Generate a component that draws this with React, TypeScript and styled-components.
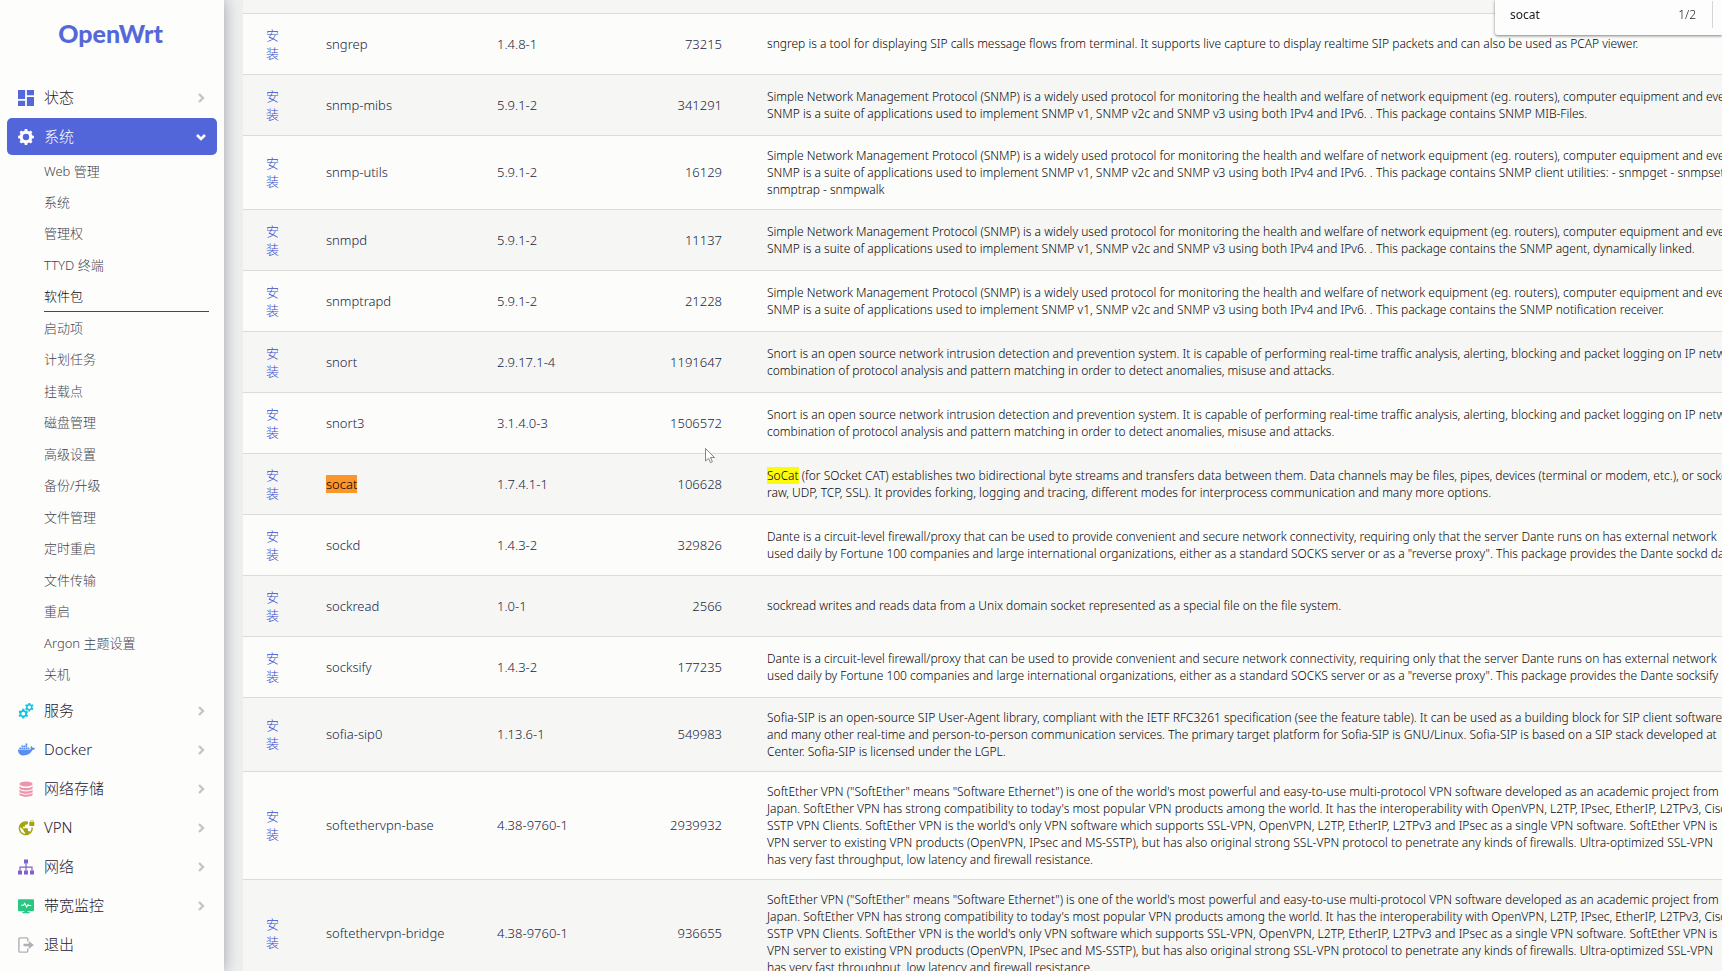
import React from "react";
import styled, { createGlobalStyle } from "styled-components";
import { FaDocker } from "react-icons/fa";
import { MdVpnLock } from "react-icons/md";

const font = `"Noto Sans", "Noto Sans CJK SC", sans-serif`;

const GlobalStyle = createGlobalStyle`
  *, *::before, *::after { box-sizing: border-box; }
  body {
    margin: 0;
    background: #edeeee;
    color: #32325d;
    font-family: ${font};
    font-size: 13px;
    font-weight: 300;
  }
  a { color: inherit; text-decoration: none; }
`;

const Page = styled.div`
  display: flex;
  height: 100vh;
  overflow: hidden;
`;

const Sidebar = styled.nav`
  position: relative;
  z-index: 1;
  flex: 0 0 224px;
  padding: 0 7px;
  background: #fdfdfc;
  box-shadow: 0 0 14px rgba(60, 66, 90, 0.45);
`;

const Brand = styled.a`
  display: block;
  height: 79px;
  padding: 13px 3px 0 0;
  color: #5468da;
  font-family: Lato, sans-serif;
  font-size: 25px;
  font-weight: 900;
  line-height: 40px;
  text-align: center;
`;

const Menu = styled.ul`
  display: flex;
  flex-direction: column;
  gap: 2px;
  margin: 0;
  padding: 0;
  list-style: none;
`;

const MenuLink = styled.a<{ $active?: boolean }>`
  display: flex;
  align-items: center;
  gap: 10px;
  height: 37px;
  padding: 0 10px 0 11px;
  border-radius: 5px;
  background: ${(p) => (p.$active ? "#5266da" : "transparent")};
  color: ${(p) => (p.$active ? "#ffffff" : "#1f2030")};
  font-size: 15px;
`;

const IconBox = styled.span<{ $color: string }>`
  display: flex;
  align-items: center;
  justify-content: center;
  flex: 0 0 16px;
  min-width: 0;
  height: 16px;
  color: ${(p) => p.$color};

  svg { flex: none; }
`;

const MenuLabel = styled.span`
  flex: 1;
  padding-bottom: 2px;
`;

const SubMenu = styled.ul`
  display: grid;
  grid-template-rows: repeat(17, 1fr);
  height: 535px;
  margin: 0 0 0 37px;
  padding: 0 8px 0 0;
  list-style: none;
`;

const SubLink = styled.a<{ $active?: boolean }>`
  display: flex;
  align-items: center;
  height: 31px;
  border-bottom: 1px solid ${(p) => (p.$active ? "#2744b0" : "transparent")};
  color: ${(p) => (p.$active ? "#08080c" : "#44444c")};
  font-size: 13px;
`;

const Main = styled.main`
  flex: 1;
  min-width: 0;
  padding-left: 19px;
  overflow: hidden;
`;

const Table = styled.table`
  border-collapse: collapse;
  table-layout: auto;
  min-width: 100%;
`;

const Row = styled.tr`
  height: 61px;
  background: #fcfcfb;

  &:nth-child(odd) { background: #f6f6f5; }
`;

const EdgeRow = styled.tr`
  height: 13px;
  background: #f6f6f5;
`;

const Cell = styled.td<{ $width?: number; $right?: boolean }>`
  padding: 11px 22px 11px 23px;
  border-top: 1px solid #dbdbdb;
  ${(p) => p.$width && `width: ${p.$width}px; min-width: ${p.$width}px;`}
  text-align: ${(p) => (p.$right ? "right" : "left")};
  color: #17253f;
  font-size: 13px;
  line-height: 18px;
  white-space: nowrap;
`;

const InstallCell = styled(Cell)`
  white-space: normal;
`;

const Description = styled(Cell)`
  color: #060608;
  font-size: 12px;
  line-height: 17px;
`;

const Line = styled.div``;

const InstallLink = styled.a`
  display: block;
  width: 14px;
  color: #3a4bd0;
`;

const Mark = styled.mark<{ $current?: boolean }>`
  background: ${(p) => (p.$current ? "#fa962c" : "#fdfb0c")};
  color: #000000;
`;

const FindBar = styled.div`
  position: fixed;
  z-index: 2;
  top: 0;
  right: 0;
  display: flex;
  align-items: center;
  width: 227px;
  height: 35px;
  padding: 0 9px 6px 15px;
  border-bottom-left-radius: 3px;
  background: #fdfdfd;
  box-shadow: 0 1px 3px rgba(0, 0, 0, 0.5);
  color: #222428;
  font-size: 12px;
`;

const FindInput = styled.input`
  flex: 1;
  min-width: 0;
  padding: 0;
  border: 0;
  outline: 0;
  background: transparent;
  color: #1c1c20;
  font-family: ${font};
  font-size: 12px;
`;

const FindCount = styled.span`
  height: 27px;
  padding-right: 16px;
  border-right: 1px solid #d6d6d6;
  line-height: 27px;
`;

const Cursor = styled.svg`
  position: fixed;
  z-index: 3;
  top: 448px;
  left: 705px;
`;

function gearPath(cx: number, cy: number, outer: number, inner: number, hole: number, teeth: number) {
  const step = (Math.PI * 2) / teeth;
  const at = (r: number, a: number) => `${(cx + r * Math.sin(a)).toFixed(2)} ${(cy - r * Math.cos(a)).toFixed(2)}`;
  let d = "";
  for (let i = 0; i < teeth; i++) {
    const a = i * step;
    d += `${i ? "L" : "M"}${at(inner, a - step * 0.3)}L${at(outer, a - step * 0.2)}L${at(outer, a + step * 0.2)}L${at(inner, a + step * 0.3)}`;
  }
  return `${d}Z M${cx - hole} ${cy}a${hole} ${hole} 0 1 0 ${hole * 2} 0a${hole} ${hole} 0 1 0 ${-hole * 2} 0Z`;
}

const DashboardIcon = () => (
  <svg width="16" height="16" viewBox="3 3 18 18" fill="currentColor">
    <path d="M3 13h8V3H3v10zm0 8h8v-6H3v6zm10 0h8V11h-8v10zm0-18v6h8V3h-8z" />
  </svg>
);

const GearIcon = () => (
  <svg width="16" height="16" viewBox="0 0 16 16">
    <path fillRule="evenodd" fill="currentColor" d={gearPath(8, 8, 8, 6.4, 3.2, 8)} />
  </svg>
);

const GearsIcon = () => (
  <svg width="16" height="16" viewBox="0 0 16 16">
    <path fillRule="evenodd" fill="currentColor" d={gearPath(5.3, 10.7, 5, 3.8, 1.9, 6)} />
    <path fillRule="evenodd" fill="currentColor" d={gearPath(11.3, 4.2, 4.4, 3.3, 1.7, 6)} />
  </svg>
);

const DatabaseIcon = () => (
  <svg width="16" height="16" viewBox="0 0 16 16" fill="currentColor">
    <ellipse cx="8" cy="3" rx="6.6" ry="2.6" />
    <path d="M1.4 5.2c1.4 1.4 4 1.8 6.6 1.8s5.2-.4 6.6-1.8v1.9C14.600 8.500 11.600 9.400 8 9.400S1.400 8.500 1.400 7.100z" />
    <path d="M1.400 8.700c1.400 1.300 4 1.700 6.600 1.700s5.200-.4 6.600-1.700v1.800c0 1.400-3 2.200-6.600 2.200s-6.600-.8-6.600-2.200z" />
    <path d="M1.400 12c1.400 1.300 4 1.700 6.600 1.700s5.200-.4 6.600-1.700v1.600c0 1.400-3 2.200-6.600 2.200s-6.600-.8-6.600-2.200z" />
  </svg>
);

const NetworkIcon = () => (
  <svg width="16" height="16" viewBox="0 0 16 16" fill="currentColor">
    <path d="M6 0.500h4v4H6zM0 11.500h4v4H0zM6 11.500h4v4H6zM12 11.500h4v4h-4z" />
    <path d="M7.400 4.500h1.200v3h6V11.500h-1.200V8.700H8.600v2.800H7.400V8.700H2.600v2.800H1.400V7.500h6z" />
  </svg>
);

const MonitorIcon = () => (
  <svg width="16" height="16" viewBox="0 0 16 16">
    <path fill="currentColor" d="M1 1.200h14a1 1 0 0 1 1 1v10a1 1 0 0 1-1 1H9.600v.9h2v1.200H4.400v-1.200h2v-.9H1a1 1 0 0 1-1-1v-10a1 1 0 0 1 1-1z" />
    <path fill="none" stroke="#fff" strokeWidth="1.100" d="M3 7.300h2.500l1.200-2L8.600 9l1.500-2.300.7.800h2.400" />
  </svg>
);

const LogoutIcon = () => (
  <svg width="16" height="16" viewBox="0 0 16 16">
    <path fill="none" stroke="currentColor" strokeWidth="1.400" d="M9.800 4.500V1.900a1 1 0 0 0-1-1H1.900a1 1 0 0 0-1 1v12.200a1 1 0 0 0 1 1h6.900a1 1 0 0 0 1-1v-2.600" />
    <path fill="currentColor" d="M5.500 6.700h5.300V4l5 4-5 4V9.300H5.500z" />
  </svg>
);

const ChevronRight = () => (
  <svg width="12" height="12" viewBox="0 0 12 12">
    <path d="M4 2l4 4-4 4" fill="none" stroke="#c3c5cc" strokeWidth="2.400" />
  </svg>
);

const ChevronDown = () => (
  <svg width="12" height="10" viewBox="0 0 12 10">
    <path d="M2 3l4 4 4-4" fill="none" stroke="#fff" strokeWidth="2.600" />
  </svg>
);

type Item = { label: string; color: string; icon: React.ReactNode; leaf?: boolean };

const menuBottom: Item[] = [
  { label: "服务", color: "#16c2e2", icon: <GearsIcon /> },
  { label: "Docker", color: "#5a8ff0", icon: <FaDocker size={17} /> },
  { label: "网络存储", color: "#ec96ab", icon: <DatabaseIcon /> },
  { label: "VPN", color: "#a2a413", icon: <MdVpnLock size={17} /> },
  { label: "网络", color: "#8060cc", icon: <NetworkIcon /> },
  { label: "带宽监控", color: "#2bc584", icon: <MonitorIcon /> },
  { label: "退出", color: "#aeb0b5", icon: <LogoutIcon />, leaf: true },
];

const subItems = [
  "Web 管理", "系统", "管理权", "TTYD 终端", "软件包", "启动项", "计划任务", "挂载点", "磁盘管理",
  "高级设置", "备份/升级", "文件管理", "定时重启", "文件传输", "重启", "Argon 主题设置", "关机",
];

const snmp1 = "Simple Network Management Protocol (SNMP) is a widely used protocol for monitoring the health and welfare of network equipment (eg. routers), computer equipment and even";
const snmp2 = "SNMP is a suite of applications used to implement SNMP v1, SNMP v2c and SNMP v3 using both IPv4 and IPv6. . This package contains ";
const snort = [
  "Snort is an open source network intrusion detection and prevention system. It is capable of performing real-time traffic analysis, alerting, blocking and packet logging on IP networks.",
  "combination of protocol analysis and pattern matching in order to detect anomalies, misuse and attacks.",
];
const dante1 = "Dante is a circuit-level firewall/proxy that can be used to provide convenient and secure network connectivity, requiring only that the server Dante runs on has external network";
const dante2 = "used daily by Fortune 100 companies and large international organizations, either as a standard SOCKS server or as a \"reverse proxy\". This package provides the Dante ";
const softether = [
  "SoftEther VPN (\"SoftEther\" means \"Software Ethernet\") is one of the world's most powerful and easy-to-use multi-protocol VPN software developed as an academic project from",
  "Japan. SoftEther VPN has strong compatibility to today's most popular VPN products among the world. It has the interoperability with OpenVPN, L2TP, IPsec, EtherIP, L2TPv3, Cisco",
  "SSTP VPN Clients. SoftEther VPN is the world's only VPN software which supports SSL-VPN, OpenVPN, L2TP, EtherIP, L2TPv3 and IPsec as a single VPN software. SoftEther VPN is",
  "VPN server to existing VPN products (OpenVPN, IPsec and MS-SSTP), but has also original strong SSL-VPN protocol to penetrate any kinds of firewalls. Ultra-optimized SSL-VPN",
  "has very fast throughput, low latency and firewall resistance.",
];

type Pkg = { name: React.ReactNode; version: string; size: string; lines: React.ReactNode[] };

const packages: Pkg[] = [
  { name: "sngrep", version: "1.4.8-1", size: "73215", lines: ["sngrep is a tool for displaying SIP calls message flows from terminal. It supports live capture to display realtime SIP packets and can also be used as PCAP viewer."] },
  { name: "snmp-mibs", version: "5.9.1-2", size: "341291", lines: [snmp1, snmp2 + "SNMP MIB-Files."] },
  { name: "snmp-utils", version: "5.9.1-2", size: "16129", lines: [snmp1, snmp2 + "SNMP client utilities: - snmpget - snmpset", "snmptrap - snmpwalk"] },
  { name: "snmpd", version: "5.9.1-2", size: "11137", lines: [snmp1, snmp2 + "the SNMP agent, dynamically linked."] },
  { name: "snmptrapd", version: "5.9.1-2", size: "21228", lines: [snmp1, snmp2 + "the SNMP notification receiver."] },
  { name: "snort", version: "2.9.17.1-4", size: "1191647", lines: snort },
  { name: "snort3", version: "3.1.4.0-3", size: "1506572", lines: snort },
  {
    name: <Mark $current>socat</Mark>, version: "1.7.4.1-1", size: "106628",
    lines: [
      <><Mark>SoCat</Mark> (for SOcket CAT) establishes two bidirectional byte streams and transfers data between them. Data channels may be files, pipes, devices (terminal or modem, etc.), or sockets</>,
      "raw, UDP, TCP, SSL). It provides forking, logging and tracing, different modes for interprocess communication and many more options.",
    ],
  },
  { name: "sockd", version: "1.4.3-2", size: "329826", lines: [dante1, dante2 + "sockd daemon"] },
  { name: "sockread", version: "1.0-1", size: "2566", lines: ["sockread writes and reads data from a Unix domain socket represented as a special file on the file system."] },
  { name: "socksify", version: "1.4.3-2", size: "177235", lines: [dante1, dante2 + "socksify"] },
  {
    name: "sofia-sip0", version: "1.13.6-1", size: "549983",
    lines: [
      "Sofia-SIP is an open-source SIP User-Agent library, compliant with the IETF RFC3261 specification (see the feature table). It can be used as a building block for SIP client software",
      "and many other real-time and person-to-person communication services. The primary target platform for Sofia-SIP is GNU/Linux. Sofia-SIP is based on a SIP stack developed at",
      "Center. Sofia-SIP is licensed under the LGPL.",
    ],
  },
  { name: "softethervpn-base", version: "4.38-9760-1", size: "2939932", lines: softether },
  { name: "softethervpn-bridge", version: "4.38-9760-1", size: "936655", lines: softether },
];

export default function App() {
  return (
    <>
      <GlobalStyle />
      <Page>
        <Sidebar>
          <Brand href="#">OpenWrt</Brand>
          <Menu>
            <li>
              <MenuLink href="#">
                <IconBox $color="#5468da"><DashboardIcon /></IconBox>
                <MenuLabel>状态</MenuLabel>
                <ChevronRight />
              </MenuLink>
            </li>
            <li>
              <MenuLink href="#" $active>
                <IconBox $color="#ffffff"><GearIcon /></IconBox>
                <MenuLabel>系统</MenuLabel>
                <ChevronDown />
              </MenuLink>
              <SubMenu>
                {subItems.map((label) => (
                  <li key={label}>
                    <SubLink href="#" $active={label === "软件包"}>{label}</SubLink>
                  </li>
                ))}
              </SubMenu>
            </li>
            {menuBottom.map((item) => (
              <li key={item.label}>
                <MenuLink href="#">
                  <IconBox $color={item.color}>{item.icon}</IconBox>
                  <MenuLabel>{item.label}</MenuLabel>
                  {!item.leaf && <ChevronRight />}
                </MenuLink>
              </li>
            ))}
          </Menu>
        </Sidebar>
        <Main>
          <Table>
            <tbody>
              <EdgeRow aria-hidden="true"><td colSpan={5} /></EdgeRow>
              {packages.map((pkg, i) => (
                <Row key={i}>
                  <InstallCell $width={60}><InstallLink href="#">安装</InstallLink></InstallCell>
                  <Cell $width={171}>{pkg.name}</Cell>
                  <Cell $width={156}>{pkg.version}</Cell>
                  <Cell $width={114} $right>{pkg.size}</Cell>
                  <Description>
                    {pkg.lines.map((line, n) => <Line key={n}>{line}</Line>)}
                  </Description>
                </Row>
              ))}
            </tbody>
          </Table>
        </Main>
      </Page>
      <FindBar>
        <FindInput aria-label="Find in page" defaultValue="socat" />
        <FindCount>1/2</FindCount>
      </FindBar>
      <Cursor width="12" height="17" viewBox="0 0 12 17" aria-hidden="true">
        <path d="M.5.500v12.500l3-2.700 1.900 4.300 2-.9-1.900-4.200h4z" fill="#fff" stroke="#77777c" strokeWidth="0.900" />
      </Cursor>
    </>
  );
}
